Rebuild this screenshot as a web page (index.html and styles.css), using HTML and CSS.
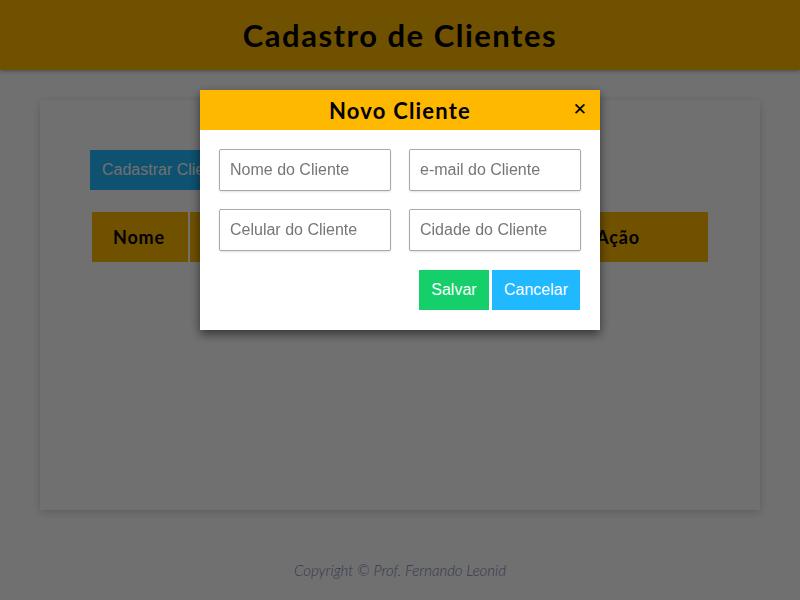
FILE: index.html
```html
<!DOCTYPE html>
<html lang="pt-BR">
<head>
<meta charset="utf-8">
<title>Cadastro de Clientes</title>
<link rel="stylesheet" href="styles.css">
</head>
<body>
<header class="topbar">
  <h1 class="title">Cadastro de Clientes</h1>
</header>
<main class="card">
  <button class="btn btn-blue btn-add">Cadastrar Cliente</button>
  <table class="records">
    <thead>
      <tr>
        <th class="col-nome">Nome</th>
        <th class="col-email">E-mail</th>
        <th class="col-cel">Celular</th>
        <th class="col-cid">Cidade</th>
        <th class="col-acao">Ação</th>
      </tr>
    </thead>
    <tbody></tbody>
  </table>
</main>
<footer class="footer">Copyright © Prof. Fernando Leonid</footer>

<div class="overlay">
  <div class="modal">
    <div class="modal-head">
      <h2 class="modal-title">Novo Cliente</h2>
      <span class="modal-close">&#x2715;</span>
    </div>
    <form class="modal-form">
      <input class="field" type="text" placeholder="Nome do Cliente">
      <input class="field" type="text" placeholder="e-mail do Cliente">
      <input class="field" type="text" placeholder="Celular do Cliente">
      <input class="field" type="text" placeholder="Cidade do Cliente">
      <div class="actions">
        <button type="button" class="btn btn-green">Salvar</button>
        <button type="button" class="btn btn-blue">Cancelar</button>
      </div>
    </form>
  </div>
</div>
</body>
</html>
```
FILE: styles.css
```css
* { box-sizing: border-box; }
html, body { margin: 0; padding: 0; }
body {
  background: #ffffff;
  font-family: "Lato", "Liberation Sans", sans-serif;
  height: 600px;
  overflow: hidden;
}
.topbar {
  height: 70px;
  background: #ffb800;
  display: flex;
  align-items: center;
  justify-content: center;
  box-shadow: 0 1px 4px rgba(0,0,0,0.35);
}
.title {
  margin: 0 0 1px;
  font-size: 31px;
  font-weight: 700;
  letter-spacing: 1.5px;
  color: #000;
}
.card {
  margin: 30px 40px 0;
  height: 410px;
  background: #fefefe;
  box-shadow: 0 2px 8px rgba(0,0,0,0.18);
  padding: 50px 50px;
}
.btn {
  border: none;
  font-family: "Liberation Sans", Arial, sans-serif;
  font-size: 16px;
  color: #fff;
  height: 40px;
  padding: 0 12px;
  cursor: pointer;
}
.btn-blue { background: #20b8ff; }
.btn-green { background: #15cf6b; }
.btn-add { display: block; }
.records {
  margin-top: 20px;
  border-spacing: 2px;
  width: 620px;
}
.records th {
  background: #ffb800;
  height: 50px;
  text-align: left;
  padding: 0 21px;
  font-size: 18px;
  font-weight: 700;
  letter-spacing: 0.8px;
  color: #000;
}
.col-nome { width: 96px; }
.col-email { width: 130px; }
.col-cel { width: 120px; }
.col-cid { width: 130px; }
.col-acao { width: 133px; }
.footer {
  text-align: center;
  margin-top: 51px;
  font-style: italic;
  font-size: 15px;
  color: #7a86b8;
  font-family: "Lato", "Liberation Sans", sans-serif;
  font-weight: 300;
}
.overlay {
  position: fixed;
  inset: 0;
  background: rgba(0,0,0,0.56);
  display: flex;
  justify-content: center;
  align-items: flex-start;
  padding-top: 90px;
}
.modal {
  width: 400px;
  background: #fff;
  box-shadow: 0 4px 10px rgba(0,0,0,0.55);
}
.modal-head {
  height: 40px;
  background: #ffb800;
  display: flex;
  align-items: center;
  justify-content: center;
  position: relative;
}
.modal-title {
  margin: 0;
  font-size: 22px;
  font-weight: 700;
  letter-spacing: 1.2px;
  color: #000;
}
.modal-close {
  position: absolute;
  right: 13px;
  top: 9px;
  font-size: 17px;
  font-weight: 700;
  font-family: "DejaVu Sans", sans-serif;
  color: #000;
}
.modal-form {
  display: grid;
  grid-template-columns: 172px 172px;
  column-gap: 18px;
  row-gap: 18px;
  padding: 19px 19px 20px;
}
.field {
  height: 42px;
  width: 172px;
  border: 1px solid #a9a9a9;
  border-radius: 2px;
  box-shadow: 0 1px 2px rgba(0,0,0,0.12);
  padding: 0 10px;
  font-family: "Liberation Sans", Arial, sans-serif;
  font-size: 16px;
  color: #333;
}
.field::placeholder { color: #767676; }
.actions {
  grid-column: 1 / 3;
  display: flex;
  justify-content: flex-end;
  gap: 3px;
  padding-right: 1px;
  margin-top: 1px;
}
.actions .btn-green { width: 70px; padding: 0; }
```
